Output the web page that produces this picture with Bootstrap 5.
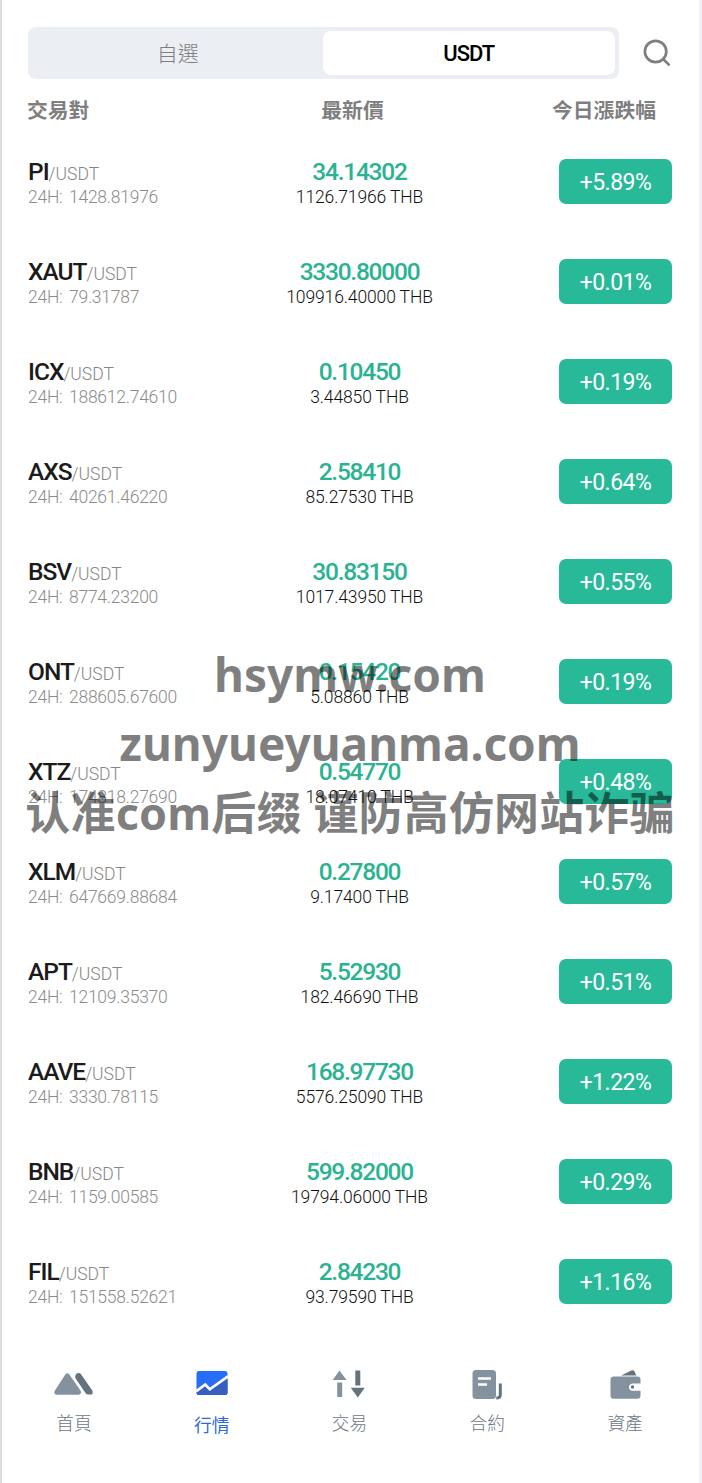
<!DOCTYPE html>
<html lang="zh-Hant">
<head>
<meta charset="utf-8">
<meta name="viewport" content="width=device-width, initial-scale=1">
<title>行情</title>
<link rel="stylesheet" href="https://cdn.jsdelivr.net/npm/bootstrap@5.3.0/dist/css/bootstrap.min.css">
<style>
body{background:#f0f2f5;font-family:Roboto,"Noto Sans CJK TC",sans-serif;color:#1c1c1c;line-height:1;overflow:hidden}
.screen{width:699px;height:1483px;background:#fff;border-left:2px solid #dcdddf;padding-top:27px}
.topbar{padding-left:26px}
.tabs{width:591px;height:52px;background:#ebeef3;border-radius:8px;padding:4px}
.tab-item{border-radius:8px;font-size:21px;color:#7d7d7d;font-weight:300;padding-top:2px}
.tab-item.on{background:#fff;color:#000;font-weight:500;font-size:22px;letter-spacing:-1px;margin-left:-1px;flex-grow:1}
.cols{height:46px;margin-top:6px;font-size:20.8px;font-weight:700;color:#7f7f7f}
.pair,.rate{width:216px}
.pair{padding-left:25px}
.rate{padding-right:27px}
.quote{height:100px}
.quote .pair{padding-left:26px}
.quote .pair,.quote .mid{padding-top:6px}
.sym{font-size:24.5px;font-weight:500;letter-spacing:-1px;line-height:25px;height:25px;color:#1b1b1b}
.unit{font-size:17.5px;font-weight:300;color:#858585;letter-spacing:0;line-height:1}
.vol,.fiat{font-size:17.5px;font-weight:300;letter-spacing:-.12px;line-height:26px;color:#8c8c8c;white-space:nowrap}
.vol{letter-spacing:-.25px;word-spacing:2.5px}
.fiat{color:#111}
.price{font-size:24.5px;font-weight:500;letter-spacing:-1.25px;line-height:25px;color:#2bb391}
.mid{padding-left:18px}
.chg{width:113px;height:45px;border-radius:7px;background:#28b998;color:#fff;font-size:23px;letter-spacing:-.5px;padding-top:2px}
.tabbar{padding:0 5px 0 3px;margin-top:36px}
.tabbar .cell{height:74px;font-size:17.7px;font-weight:300;color:#6d7682}
.tabbar .cell.on{color:#2f68dc;font-weight:400}
.tabbar svg{display:block;margin-bottom:13px}
.mark-layer{left:-1px;top:640px;width:702px;color:rgba(0,0,0,.5);font-family:"Noto Sans","Noto Sans CJK SC",sans-serif;font-weight:700;font-size:46px;white-space:nowrap;pointer-events:none}
.mark-layer div{height:69px;line-height:69px}
.mark-layer .cjk{font-size:45px;letter-spacing:.15px}
</style>
</head>
<body>
<main class="screen">
  <div class="topbar d-flex align-items-center">
    <div class="tabs d-flex">
      <div class="tab-item d-flex align-items-center justify-content-center w-50">自選</div>
      <div class="tab-item on d-flex align-items-center justify-content-center w-50">USDT</div>
    </div>
    <svg style="margin-left:24px" width="28" height="28" viewBox="0 0 28 28" fill="none" stroke="#7f7f7f" stroke-width="2.7" stroke-linecap="round"><circle cx="12.6" cy="12.500" r="10.700"/><path d="M20.600 20.500l5.200 5.100"/></svg>
  </div>
  <div class="cols d-flex align-items-start pt-3">
    <div class="pair">交易對</div>
    <div class="flex-fill text-center ps-1">最新價</div>
    <div class="rate text-end" style="padding-right:43px">今日漲跌幅</div>
  </div>
  <section id="quotes"></section>
  <nav class="tabbar d-flex">
    <div class="cell flex-fill w-25 d-flex flex-column align-items-center">
      <svg width="40" height="36" viewBox="0 0 40 36"><path fill="#84929f" d="M11.3 7.5q2-2.700 4 0l11.200 16q1.600 4-2 4.200H2.800q-3.500-.2-2-4z"/><path fill="#65737e" stroke="#fff" stroke-width="1.200" d="M20.600 9.500q.5-4 4.400-4 1.500 0 2.500 1.500l11.500 16.500q1.200 4.500-2.500 4.700h-2.500q-1.800 0-3-1.800l-9.600-14q-.8-1.200-.8-2.900z"/></svg>
      <span>首頁</span>
    </div>
    <div class="cell on flex-fill w-25 d-flex flex-column align-items-center">
      <svg width="32" height="38" viewBox="0 0 32 38"><rect x=".5" y="4" width="31" height="24" rx="2.500" fill="#286df5"/><path fill="#365fc0" d="M.5 25l9-6.200 4.800 4.200L31.500 11v14.500q0 2.500-2.500 2.500H3q-2.500 0-2.500-2.500z"/><path d="M0 24.300l9.300-6.800 4.500 4.800L32 9.300" fill="none" stroke="#fff" stroke-width="2.700"/></svg>
      <span>行情</span>
    </div>
    <div class="cell flex-fill w-25 d-flex flex-column align-items-center">
      <svg width="34" height="36" viewBox="0 0 34 36"><path fill="#84929f" d="M7.500 3.500L14.500 13H.7zM5.200 15.500h5V30h-5z"/><path fill="#65737e" d="M23.300 3.500h5V18.500h-5zM18.800 20.700h14L25.800 30.500z"/></svg>
      <span>交易</span>
    </div>
    <div class="cell flex-fill w-25 d-flex flex-column align-items-center">
      <svg width="30" height="36" viewBox="0 0 30 36"><path d="M28.300 16.500V28q0 3-4 3" fill="none" stroke="#65737e" stroke-width="3"/><rect x=".5" y="3" width="23.500" height="29" rx="3.500" fill="#84929f"/><path stroke="#fff" stroke-width="2.500" d="M6 11.500h13M6 17.500h9"/></svg>
      <span>合約</span>
    </div>
    <div class="cell flex-fill w-25 d-flex flex-column align-items-center">
      <svg width="31" height="36" viewBox="0 0 31 36"><path fill="#65737e" d="M11 8.500L21.500 3.500q2-.8 3 1l1.800 4z"/><path fill="#84929f" d="M3.500 9.500h24q3 0 3 3v4h-8q-3.500.5-3.500 3.700t3.500 3.500h8v5q0 3-3 3h-24q-3 0-3-3v-16q0-3 3-3.200z"/><circle cx="22.500" cy="20" r="1.700" fill="#65737e"/></svg>
      <span>資產</span>
    </div>
  </nav>
</main>
<div class="mark-layer position-absolute text-center">
  <div>hsymw.com</div>
  <div>zunyueyuanma.com</div>
  <div class="cjk">认准com后缀 谨防高仿网站诈骗</div>
</div>
<script>
const rows=[
["PI","1428.81976","34.14302","1126.71966","5.89"],
["XAUT","79.31787","3330.80000","109916.40000","0.01"],
["ICX","188612.74610","0.10450","3.44850","0.19"],
["AXS","40261.46220","2.58410","85.27530","0.64"],
["BSV","8774.23200","30.83150","1017.43950","0.55"],
["ONT","288605.67600","0.15420","5.08860","0.19"],
["XTZ","174818.27690","0.54770","18.07410","0.48"],
["XLM","647669.88684","0.27800","9.17400","0.57"],
["APT","12109.35370","5.52930","182.46690","0.51"],
["AAVE","3330.78115","168.97730","5576.25090","1.22"],
["BNB","1159.00585","599.82000","19794.06000","0.29"],
["FIL","151558.52621","2.84230","93.79590","1.16"]];
document.getElementById("quotes").innerHTML=rows.map(([s,v,p,f,c])=>`
<div class="quote d-flex align-items-center">
  <div class="pair"><div class="sym">${s}<span class="unit">/USDT</span></div><div class="vol">24H: ${v}</div></div>
  <div class="mid flex-fill text-center"><div class="price">${p}</div><div class="fiat">${f} THB</div></div>
  <div class="rate d-flex justify-content-end"><div class="chg d-flex align-items-center justify-content-center">+${c}%</div></div>
</div>`).join("");
</script>
<script src="https://cdn.jsdelivr.net/npm/bootstrap@5.3.0/dist/js/bootstrap.bundle.min.js"></script>
</body>
</html>
